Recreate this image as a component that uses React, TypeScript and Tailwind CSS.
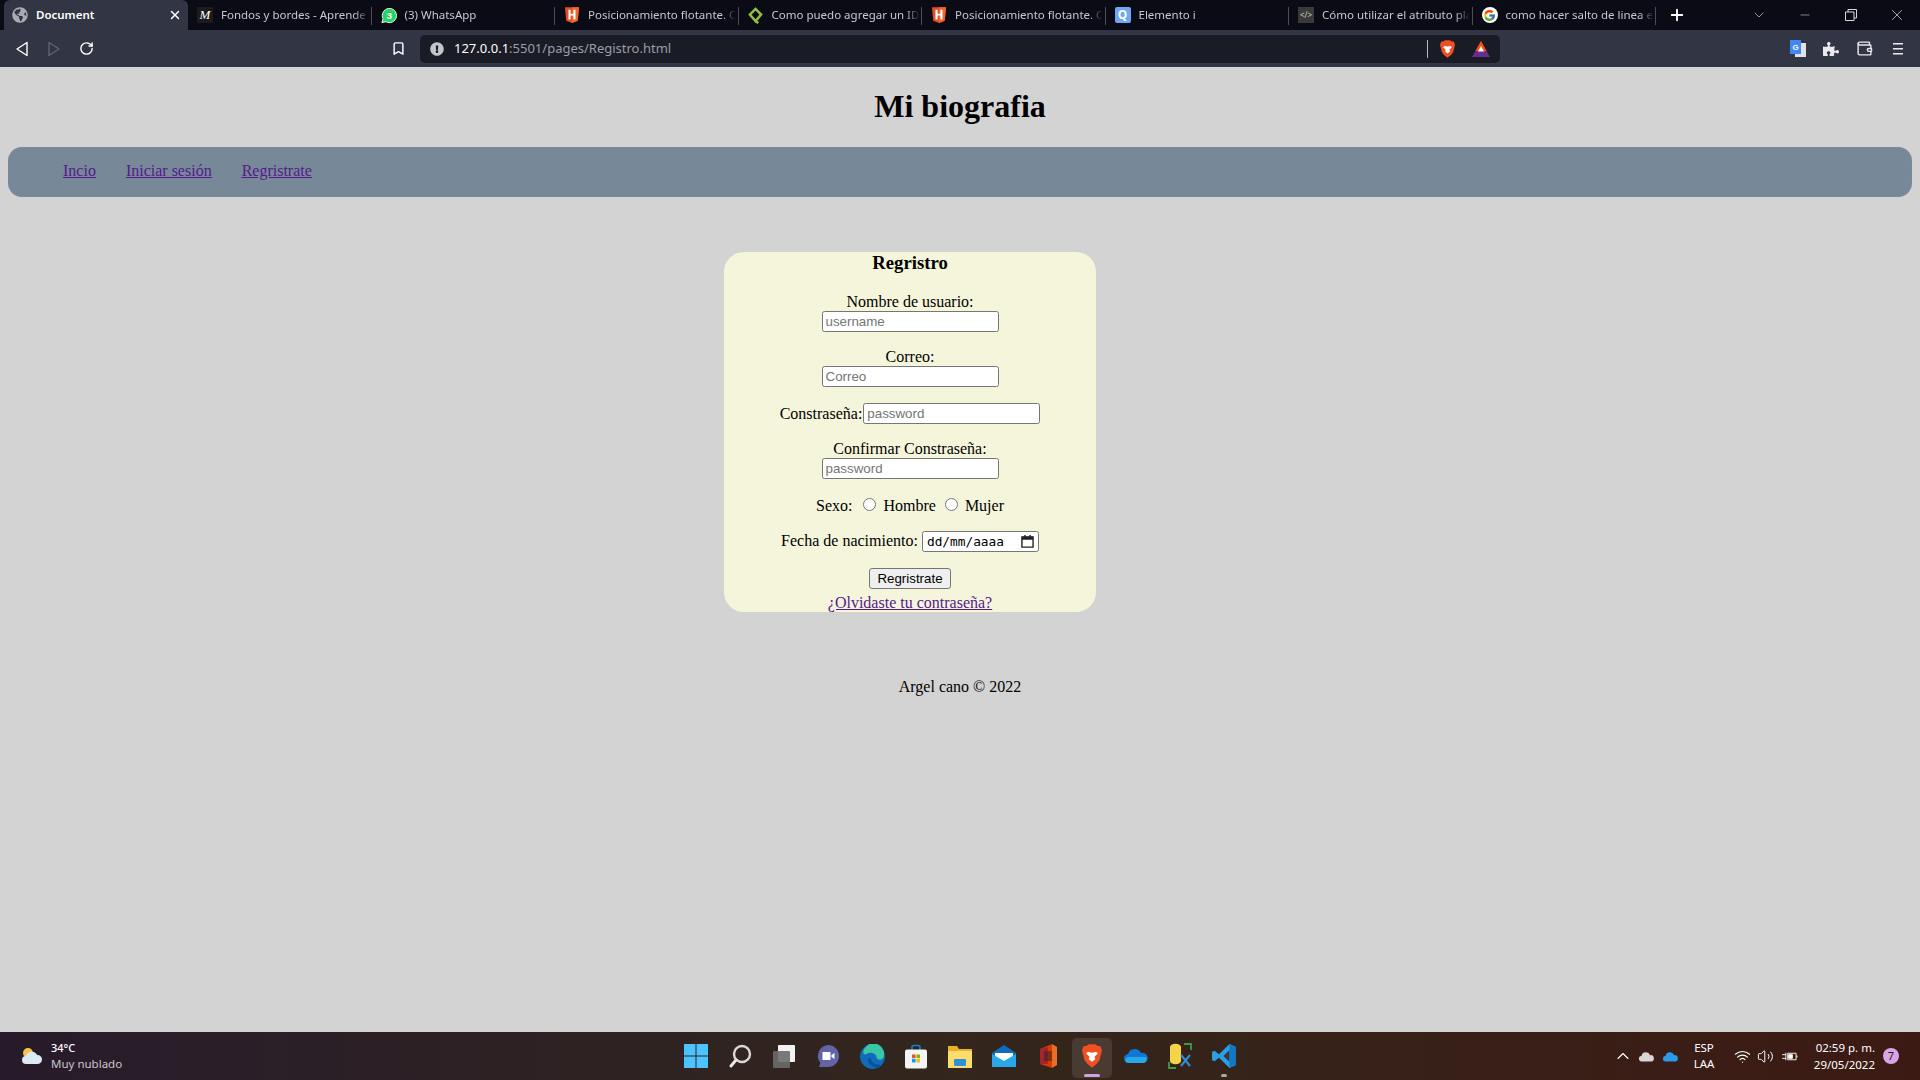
import React from 'react';
import { Bookmark, ChevronDown, ChevronUp, Minus, Plus, RotateCw, Volume2, Wallet, Wifi, X } from 'lucide-react';
import { FaExclamationCircle, FaGlobeAmericas, FaPuzzlePiece } from 'react-icons/fa';
import { FcGoogle } from 'react-icons/fc';

const Html5Icon = () => (
  <svg viewBox="0 0 16 18" className="w-[14px] h-[16px]">
    <path d="M0 0h16l-1.4 15.5L8 18l-6.6-2.5z" fill="#e44d26" />
    <path d="M8 0h8l-1.4 15.5L8 18z" fill="#f16529" />
    <path d="M4 3v11h2.4V9.7h3.2V14H12V3H9.600V7.500H6.400V3z" fill="#fff" />
  </svg>
);

const WhatsappIcon = () => (
  <svg viewBox="0 0 18 18" className="w-[17px] h-[17px]">
    <path d="M1 17l1.300-4.400A8 8 0 1 1 5.500 16z" fill="#25d366" stroke="#fff" strokeWidth="1" />
    <text x="9.200" y="13" fontSize="11" fontWeight="700" textAnchor="middle" fill="#fff" fontFamily="Liberation Sans">3</text>
  </svg>
);

const DiamondIcon = () => (
  <svg viewBox="0 0 16 18" className="w-[15px] h-[17px]">
    <path d="M8 2l6 6-6 7-6-7zM8 15l3 2" fill="none" stroke="#8fc23c" strokeWidth="2.600" />
  </svg>
);

const BraveIcon = ({ size = 'w-[18px] h-[21px]' }: { size?: string }) => (
  <svg viewBox="0 0 24 28" className={size}>
    <path d="M5 2l3-2h8l3 2 3 0 2 5-1 4-2 8-3 4-6 5-6-5-3-4-2-8-1-4 2-5z" fill="#f04e23" />
    <path d="M7 9l5 1 5-1 2 2-4 4 1 3-4 3-4-3 1-3-4-4z" fill="#fff" />
  </svg>
);

const tabs: { title: string; icon: React.ReactNode }[] = [
  { title: 'Fondos y bordes - Aprende', icon: <span className="w-[16px] h-[16px] bg-[#1b1b1b] text-white text-[13px] italic leading-[16px] text-center font-['Liberation_Serif',serif]">M</span> },
  { title: '(3) WhatsApp', icon: <WhatsappIcon /> },
  { title: 'Posicionamiento flotante. C', icon: <Html5Icon /> },
  { title: 'Como puedo agregar un ID', icon: <DiamondIcon /> },
  { title: 'Posicionamiento flotante. C', icon: <Html5Icon /> },
  { title: 'Elemento i', icon: <span className="w-[16px] h-[16px] rounded-[2px] bg-[#6ea8f5] text-white text-[12px] font-bold leading-[16px] text-center">Q</span> },
  { title: 'Cómo utilizar el atributo pla', icon: <span className="w-[16px] h-[16px] bg-[#3a3a3a] text-[#cfcfcf] text-[8px] leading-[16px] text-center">&lt;/&gt;</span> },
  { title: 'como hacer salto de linea e', icon: <span className="w-[16px] h-[16px] rounded-full bg-white flex items-center justify-center"><FcGoogle size={13} /></span> },
];

const TabStrip = () => (
  <div className="h-[30px] bg-[#0b0b16] flex items-stretch pl-[4px] shrink-0">
    <div className="w-[184px] bg-[#323543] rounded-t-[6px] flex items-center pl-[8px] pr-[6px] gap-[8px]">
      <FaGlobeAmericas size={16} className="text-[#a9abb3]" />
      <span className="flex-1 text-white text-[11.500px] font-semibold">Document</span>
      <X size={14} strokeWidth={2.500} className="text-white" />
    </div>
    {tabs.map((tab, i) => (
      <div key={i} className="w-[183.500px] flex items-center pl-[9px] gap-[8px] relative">
        <span className="w-[16px] flex justify-center shrink-0">{tab.icon}</span>
        <span className="w-[148px] whitespace-nowrap text-[#c6c8d0] text-[11.500px] [mask-image:linear-gradient(to_right,black_90%,transparent)]">{tab.title}</span>
        <span className="absolute right-0 top-[7px] h-[18px] w-px bg-[#4a4c58]" />
      </div>
    ))}
    <div className="w-[42px] flex items-center justify-center"><Plus size={18} strokeWidth={2.500} className="text-white" /></div>
    <div className="flex-1 flex items-center justify-end text-[#d8d8de]">
      <span className="w-[46px] flex justify-center"><ChevronDown size={16} strokeWidth={1} /></span>
      <span className="w-[46px] flex justify-center"><Minus size={14} strokeWidth={1} /></span>
      <span className="w-[46px] flex justify-center">
        <svg viewBox="0 0 12 12" className="w-[12px] h-[12px]" fill="none" stroke="currentColor"><path d="M.5 3h8.500v8.500H.5zM3 3V.5h8.500V9H9" /></svg>
      </span>
      <span className="w-[46px] flex justify-center"><X size={18} strokeWidth={1} /></span>
    </div>
  </div>
);

const Toolbar = () => (
  <div className="h-[37px] bg-[#323543] flex items-center shrink-0">
    <div className="w-[398px] flex items-center pl-[15px] gap-[18px] text-white">
      <svg viewBox="0 0 14 16" className="w-[14px] h-[16px]"><path d="M12 1.500v13L2 8z" fill="none" stroke="#fff" strokeWidth="1.400" strokeLinejoin="round" /></svg>
      <svg viewBox="0 0 14 16" className="w-[14px] h-[16px]"><path d="M2 1.500v13L12 8z" fill="none" stroke="#62646f" strokeWidth="1.400" strokeLinejoin="round" /></svg>
      <RotateCw size={15} strokeWidth={2.300} />
    </div>
    <div className="w-[22px] -ml-[11px] flex justify-center text-white"><Bookmark size={15} strokeWidth={2.300} /></div>
    <div className="w-[1080px] ml-[11px] h-[28px] rounded-[5px] bg-[#1a1c25] flex items-center pl-[10px] pr-[10px]">
      <FaExclamationCircle size={14} className="text-[#c4c5cb]" />
      <span className="ml-[10px] flex-1 text-[13px] text-[#9b9da6]"><span className="text-white">127.0.0.1</span>:5501/pages/Registro.html</span>
      <span className="w-px h-[18px] bg-[#b9bac0]" />
      <span className="ml-[11px] w-[17px] flex justify-center"><BraveIcon size="w-[15px] h-[18px]" /></span>
      <svg viewBox="0 0 18 16" className="ml-[16px] w-[18px] h-[16px]">
        <path d="M9 0l9 16H0z" fill="#662d91" /><path d="M9 0l5.500 10h-11z" fill="#ff5000" /><path d="M9 5l3 5.500H6z" fill="#fff" />
      </svg>
    </div>
    <div className="flex-1 flex items-center pl-[290px] gap-[17px] text-[#e9e9ee]">
      <svg viewBox="0 0 16 18" className="w-[16px] h-[18px]"><rect x="5" y="3" width="11" height="14" fill="#dfe1e5" /><rect width="11" height="14" fill="#4285f4" /><text x="5.500" y="10" fontSize="8" fontWeight="700" textAnchor="middle" fill="#fff" fontFamily="Liberation Sans">G</text></svg>
      <FaPuzzlePiece size={16} />
      <Wallet size={17} strokeWidth={2} />
      <svg viewBox="0 0 12 14" className="ml-[2px] w-[12px] h-[14px]" fill="#e9e9ee"><path d="M1 1h10v1.600H1zM1 6h10v1.600H1zM1 11h10v1.600H1z" /></svg>
    </div>
  </div>
);

const fieldInput = "w-[177px] h-[21px] bg-white border border-[#767676] rounded-[2.500px] px-[3px] text-[13.330px] font-['Liberation_Sans',sans-serif] text-black placeholder:text-[#757575] outline-none";

const RegistroForm = () => (
  <form className="ml-[724px] w-[372px] h-[360px] mt-[55px] bg-[#f5f5dc] rounded-[20px] flex flex-col items-center shrink-0">
    <h3 className="h-[22px] leading-[22px] text-[18.720px] font-bold">Regristro</h3>
    <label className="mt-[18px] h-[19px] leading-[19px]">Nombre de usuario:</label>
    <input type="text" placeholder="username" className={fieldInput} />
    <label className="mt-[15px] h-[19px] leading-[19px]">Correo:</label>
    <input type="text" placeholder="Correo" className={fieldInput} />
    <div className="mt-[16px] h-[21px] flex items-center gap-px">
      <label>Constraseña:</label>
      <input type="password" placeholder="password" className={fieldInput} />
    </div>
    <label className="mt-[15px] h-[19px] leading-[19px]">Confirmar Constraseña:</label>
    <input type="password" placeholder="password" className={fieldInput} />
    <div className="mt-[17px] h-[19px] flex items-center leading-[19px]">
      <span>Sexo:</span>
      <input type="radio" name="sexo" className="ml-[11px] mr-[7px] w-[13px] h-[13px] -mt-[3px]" />
      <span>Hombre</span>
      <input type="radio" name="sexo" className="ml-[9px] mr-[7px] w-[13px] h-[13px] -mt-[3px]" />
      <span>Mujer</span>
    </div>
    <div className="mt-[16px] h-[21px] flex items-center gap-[4px] leading-[19px]">
      <label className="-mt-[2px]">Fecha de nacimiento:</label>
      <div className="w-[117px] h-[21px] bg-white border border-[#767676] rounded-[2.500px] flex items-center justify-between pl-[4px] pr-[4px]">
        <span className="text-[12.800px] font-['DejaVu_Sans_Mono',monospace]">dd/mm/aaaa</span>
        <svg viewBox="0 0 14 14" className="w-[13px] h-[13px]"><path d="M1 2h12v11H1z" fill="none" stroke="#222" strokeWidth="1.500" /><path d="M1 2h12v3H1zM3.500 0h1.500v2H3.500zM9 0h1.500v2H9z" fill="#222" /></svg>
      </div>
    </div>
    <button type="button" className="mt-[16px] w-[82px] h-[21px] bg-[#efefef] border border-[#767676] rounded-[3px] text-[13.330px] font-['Liberation_Sans',sans-serif]">Regristrate</button>
    <a href="#" className="mt-[5px] h-[18px] leading-[18px] text-[#551a8b] underline">¿Olvidaste tu contraseña?</a>
  </form>
);

const taskIcons: React.ReactNode[] = [
  <svg viewBox="0 0 24 24" className="w-[24px] h-[24px]"><path d="M0 0h11.500v11.500H0zM12.500 0H24v11.500H12.500zM0 12.500h11.500V24H0zM12.500 12.500H24V24H12.500z" fill="#4cc2ff" /></svg>,
  <svg viewBox="0 0 24 24" className="w-[24px] h-[24px]" fill="none"><circle cx="14" cy="10" r="8" stroke="#d8d8d8" strokeWidth="2.400" /><path d="M8 16l-5 6" stroke="#e8e8e8" strokeWidth="3" strokeLinecap="round" /></svg>,
  <svg viewBox="0 0 24 24" className="w-[24px] h-[24px]"><rect x="6" y="1" width="17" height="17" rx="1" fill="#f2f2f2" /><rect x="1" y="7" width="17" height="17" rx="1" fill="#6b6b6b" fillOpacity="0.900" /></svg>,
  <svg viewBox="0 0 24 24" className="w-[24px] h-[24px]"><path d="M12 1a11 11 0 0 1 0 22H3l1.500-4A11 11 0 0 1 12 1z" fill="#6264a7" /><path d="M6.500 8h8v8h-8zM15.500 11l3-2v6l-3-2z" fill="#fff" /></svg>,
  <svg viewBox="0 0 24 24" className="w-[25px] h-[25px]"><circle cx="12" cy="12" r="12" fill="#0f6cbd" /><path d="M3 8a10 10 0 0 1 20 3c0 5-7 5-7 2 0-3-4-6-9-4-2 1-3 2-4-1z" fill="#39c6a5" /><path d="M9 14c0 5 5 8 10 7" stroke="#0b4f95" strokeWidth="3" fill="none" /></svg>,
  <svg viewBox="0 0 24 24" className="w-[24px] h-[25px]"><path d="M8 6V3a2 2 0 0 1 2-2h4a2 2 0 0 1 2 2v3" stroke="#0a84d0" strokeWidth="1.600" fill="none" /><rect x="1" y="5" width="22" height="19" rx="2" fill="#f4f4f4" /><path d="M8 10h3.600v3.600H8z" fill="#f25022" /><path d="M12.400 10H16v3.600h-3.600z" fill="#7fba00" /><path d="M8 14.400h3.600V18H8z" fill="#00a4ef" /><path d="M12.400 14.400H16V18h-3.600z" fill="#ffb900" /></svg>,
  <svg viewBox="0 0 24 24" className="w-[24px] h-[24px]"><path d="M0 2h9l2 3h13v19H0z" fill="#e8b32a" /><path d="M0 7h24v17H0z" fill="#fbdc6c" /><rect x="6" y="15" width="12" height="7" rx="1" fill="#2f8fd8" /></svg>,
  <svg viewBox="0 0 24 24" className="w-[24px] h-[24px]"><path d="M0 9l12-8 12 8v14H0z" fill="#0f6cbd" /><path d="M3 9h18v6l-9 5-9-5z" fill="#fff" /><path d="M0 10l12 7 12-7v13H0z" fill="#28a8ea" /></svg>,
  <svg viewBox="0 0 24 24" className="w-[24px] h-[26px]"><path d="M4 5l12-5v24L4 20z" fill="#d83b01" /><path d="M4 5l8-2v17l-8 0z" fill="#a4262c" /><path d="M16 0l5 3v18l-5 3z" fill="#eb6c2b" /><path d="M8 7h8v10H8z" fill="#2d221b" fillOpacity="0.500" /></svg>,
  <BraveIcon size="w-[20px] h-[24px]" />,
  <svg viewBox="0 0 24 16" className="w-[24px] h-[16px]"><path d="M5 15a4.500 4.500 0 0 1-1-9 7 7 0 0 1 13-1 5 5 0 0 1 3 10z" fill="#0f78d4" /><path d="M5 15a3 3 0 0 1-1-6h18a4 4 0 0 1-2 6z" fill="#28a8ea" /></svg>,
  <svg viewBox="0 0 24 26" className="w-[24px] h-[26px]"><path d="M2 4a5 3 0 0 1 11 0v14a5 3 0 0 1-11 0z" fill="#f5d547" /><path d="M16 1h7v6M1 19v6h7" stroke="#3f9b46" strokeWidth="1.800" fill="none" /><path d="M13 12l9 11M22 12l-9 11" stroke="#2d8fd8" strokeWidth="2" /></svg>,
  <svg viewBox="0 0 24 24" className="w-[24px] h-[26px]"><path d="M17.500 0L24 3v18l-6.500 3L7 13.800 2.500 17.300 0 16V8l2.500-1.300L7 10.200z" fill="#2b9fe6" /><path d="M17.500 6l-6 6 6 6z" fill="#35383f" /><path d="M17.500 0L24 3v18l-6.500 3z" fill="#1277c1" /></svg>,
];

const Taskbar = () => (
  <div className="h-[48px] shrink-0 flex items-center bg-gradient-to-r from-[#271b2b] via-[#33261c] to-[#3c1a14] text-white font-['Noto_Sans',sans-serif]">
    <div className="w-[674px] flex items-center pl-[21px]">
      <svg viewBox="0 0 22 18" className="w-[22px] h-[18px]">
        <circle cx="7" cy="6" r="5" fill="#f6c445" />
        <path d="M5 17a4 4 0 0 1 0-8 6 6 0 0 1 11-1 4.500 4.500 0 0 1 1 9z" fill="#dceaf5" />
      </svg>
      <div className="ml-[8px] flex flex-col leading-[16px]">
        <span className="text-[11px] font-medium">34°C</span>
        <span className="text-[11.500px] text-[#c9c6c8]">Muy nublado</span>
      </div>
    </div>
    <div className="flex">
      {taskIcons.map((icon, i) => (
        <div key={i} className="w-[44px] h-[48px] flex items-center justify-center relative">
          {i === 9 && <span className="absolute left-[2px] top-[6px] w-[40px] h-[40px] rounded-[5px] bg-white/10" />}
          <span className="relative flex">{icon}</span>
          {i === 9 && <span className="absolute left-[14px] bottom-[3px] w-[16px] h-[3px] rounded-full bg-[#cfa3e0]" />}
          {i === 12 && <span className="absolute left-[19px] bottom-[3px] w-[6px] h-[3px] rounded-full bg-[#a9a9a9]" />}
        </div>
      ))}
    </div>
    <div className="flex-1 flex items-center pl-[367px]">
      <ChevronUp size={20} strokeWidth={1.300} />
      <svg viewBox="0 0 18 12" className="ml-[5px] w-[17px] h-[11px]"><path d="M4 11.500a3 3 0 0 1-.5-6 5 5 0 0 1 9.500-1 3.500 3.500 0 0 1 1 7z" fill="#d9d6d4" /></svg>
      <svg viewBox="0 0 18 12" className="ml-[7px] w-[17px] h-[11px]"><path d="M4 11.500a3 3 0 0 1-.5-6 5 5 0 0 1 9.500-1 3.500 3.500 0 0 1 1 7z" fill="#2a9be8" /></svg>
      <div className="ml-[5px] w-[40px] flex flex-col items-center text-[11.500px] leading-[16px]"><span>ESP</span><span>LAA</span></div>
      <Wifi size={17} strokeWidth={1.600} className="ml-[10px]" />
      <Volume2 size={17} strokeWidth={1.400} className="ml-[6px]" />
      <svg viewBox="0 0 18 14" className="ml-[8px] w-[17px] h-[13px]" fill="none" stroke="#fff"><path d="M6 3.500h9v7H6zM16 6v2" /><path d="M7 5h4v4H7zM0 5h4M0 9h4M4 3v8" fill="#fff" /></svg>
      <div className="ml-[4px] w-[72px] flex flex-col items-end text-[11.500px] leading-[17px]"><span>02:59 p. m.</span><span>29/05/2022</span></div>
      <span className="ml-[8px] w-[16px] h-[16px] rounded-full bg-[#d9a5e6] text-[#2a1a20] text-[11px] leading-[16px] text-center">7</span>
    </div>
  </div>
);

const App: React.FC = () => {
  return (
    <div className="h-screen flex flex-col overflow-hidden bg-[#d3d3d3] font-['Liberation_Serif',serif] text-black text-[16px]">
      <div className="font-['Noto_Sans',sans-serif] shrink-0">
        <TabStrip />
        <Toolbar />
      </div>
      <main className="flex-1 flex flex-col min-h-0">
        <h1 className="mt-[21px] text-center text-[32px] font-bold leading-[37px]">Mi biografia</h1>
        <nav className="mt-[22px] mx-[8px] h-[50px] rounded-[14px] bg-[#778899] flex items-center pl-[55px] pb-[2px] gap-[30px] text-[#551a8b] underline">
          <a href="#">Incio</a>
          <a href="#">Iniciar sesión</a>
          <a href="#">Regristrate</a>
        </nav>
        <RegistroForm />
        <footer className="mt-[66px] text-center leading-[18px]">Argel cano © 2022</footer>
      </main>
      <Taskbar />
    </div>
  );
};

export default App;
